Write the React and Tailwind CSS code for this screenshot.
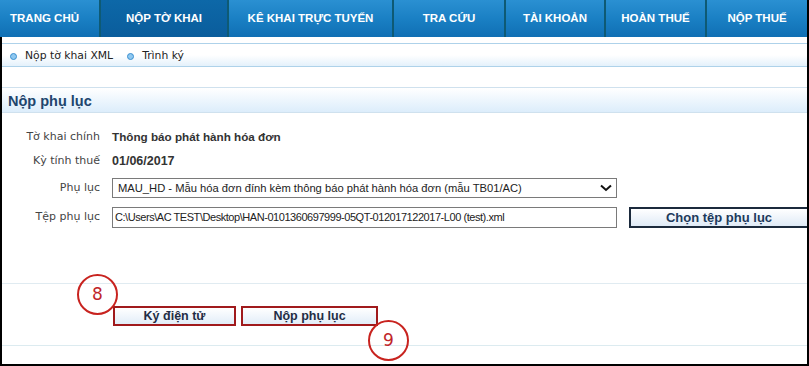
import React from "react";

const tabs = [
  { label: "TRANG CHỦ", w: "w-[101px]", left: true },
  { label: "NỘP TỜ KHAI", w: "w-[128px]", active: true },
  { label: "KÊ KHAI TRỰC TUYẾN", w: "w-[165px]" },
  { label: "TRA CỨU", w: "w-[112px]" },
  { label: "TÀI KHOẢN", w: "w-[100px]" },
  { label: "HOÀN THUẾ", w: "w-[101px]" },
  { label: "NỘP THUẾ", w: "flex-1", last: true },
];

function Bullet() {
  return (
    <span className="inline-block w-[7px] h-[7px] rounded-full bg-[#8fc8f0] border border-[#3a8fd0]" />
  );
}

function Circle({ n, className }) {
  return (
    <div
      className={
        "absolute w-[41px] h-[41px] rounded-full border-2 border-[#c8231f] flex items-center justify-center text-[17px] text-[#c0262a] font-['DejaVu_Sans',sans-serif] " +
        className
      }
    >
      {n}
    </div>
  );
}

export default function App() {
  return (
    <div className="relative w-[809px] h-[366px] bg-white overflow-hidden font-['Liberation_Sans',Arial,sans-serif]">
      <div className="h-full flex flex-col border-r-2 border-black">
        {/* Top nav */}
        <div className="h-[37px] flex bg-gradient-to-b from-[#2a90d2] via-[#1a80c4] to-[#0f6fb4]">
          {tabs.map((t, i) => (
            <div
              key={i}
              className={
                t.w +
                " h-full flex items-center text-white font-bold text-[11.5px] " +
                (t.left ? "pl-[10px] " : "justify-center ") +
                (t.last ? "" : "border-r-2 border-[#0e5a74] ") +
                (t.active ? "bg-gradient-to-b from-[#0d68a8] to-[#0a5d9c]" : "")
              }
            >
              {t.label}
            </div>
          ))}
        </div>

        {/* Body */}
        <div className="flex-1 flex flex-col border-l-2 border-b-2 border-black">
          <div className="h-[6px]" />
          {/* Sub menu */}
          <div className="h-[24px] border-t border-b border-[#aed2ea] bg-gradient-to-b from-white via-white to-[#e4f1fb] flex items-center pt-[3px] text-[#222] font-['DejaVu_Sans',sans-serif]">
            <div className="flex items-center ml-[8px] gap-[8px]">
              <Bullet />
              <span className="text-[10.8px]">Nộp tờ khai XML</span>
            </div>
            <div className="flex items-center ml-[14px] gap-[8px]">
              <Bullet />
              <span className="text-[10.8px]">Trình ký</span>
            </div>
          </div>

          <div className="h-[20px]" />

          {/* Section header */}
          <div className="h-[26px] border-t border-b border-[#cfe1ee] bg-gradient-to-b from-white to-[#dcedfb] flex items-center pl-[6px] pt-[3px]">
            <span className="font-bold text-[14.5px] text-[#21456d]">Nộp phụ lục</span>
          </div>

          {/* Form */}
          <div className="flex flex-col text-[12px]">
            <div className="mt-[13px] h-[22px] flex items-center">
              <div className="w-[98px] text-right text-[#444] font-['DejaVu_Sans',sans-serif] text-[11px]">Tờ khai chính</div>
              <div className="ml-[12px] font-bold text-[#333] text-[11.7px]">Thông báo phát hành hóa đơn</div>
            </div>
            <div className="h-[24px] flex items-center pt-[2px]">
              <div className="w-[98px] text-right text-[#444] font-['DejaVu_Sans',sans-serif] text-[11px]">Kỳ tính thuế</div>
              <div className="ml-[12px] font-bold text-[#333] text-[12.5px]">01/06/2017</div>
            </div>
            <div className="mt-[6px] h-[20px] flex items-center">
              <div className="w-[98px] text-right text-[#444] font-['DejaVu_Sans',sans-serif] text-[11px]">Phụ lục</div>
              <div className="ml-[12px] w-[505px] h-full border border-[#7a7a7a] bg-white flex items-center justify-between pl-[5px] pr-[4px] text-[#222] text-[11.2px]">
                <span>MAU_HD - Mẫu hóa đơn đính kèm thông báo phát hành hóa đơn (mẫu TB01/AC)</span>
                <svg width="12" height="8" viewBox="0 0 12 8">
                  <path d="M1 1.5 L6 6 L11 1.5" fill="none" stroke="#111" strokeWidth="2" />
                </svg>
              </div>
            </div>
            <div className="mt-[9px] h-[21px] flex items-center">
              <div className="w-[98px] text-right text-[#444] font-['DejaVu_Sans',sans-serif] text-[11px]">Tệp phụ lục</div>
              <div className="ml-[12px] w-[505px] h-full border border-[#7a7a7a] bg-white flex items-center pl-[2px] text-[#222] text-[11px] tracking-[-0.45px]">
                C:\Users\AC TEST\Desktop\HAN-0101360697999-05QT-012017122017-L00 (test).xml
              </div>
              <div className="ml-[12px] flex-1 h-full border-2 border-r-0 border-[#1b2a3c] bg-gradient-to-b from-white to-[#dfeaf6] flex items-center justify-center font-bold text-[13px] text-[#1c3a5c]">
                Chọn tệp phụ lục
              </div>
            </div>
          </div>

          <div className="mt-[55px] border-t border-[#e0ebf1]" />

          <div className="mt-[22px] h-[20px] flex">
            <div className="ml-[111px] w-[123px] h-full border-2 border-[#a01a1c] bg-gradient-to-b from-white to-[#e2edf8] flex items-center justify-center font-bold text-[12.5px] text-[#1f2d45]">
              Ký điện tử
            </div>
            <div className="ml-[5px] w-[137px] h-full border-2 border-[#a01a1c] bg-gradient-to-b from-white to-[#e2edf8] flex items-center justify-center font-bold text-[12.5px] text-[#1f2d45]">
              Nộp phụ lục
            </div>
          </div>

          <div className="mt-[19px] border-t border-[#dcebf0]" />
        </div>
      </div>

      <Circle n="8" className="left-[77px] top-[274px]" />
      <Circle n="9" className="left-[368px] top-[320px]" />
    </div>
  );
}
